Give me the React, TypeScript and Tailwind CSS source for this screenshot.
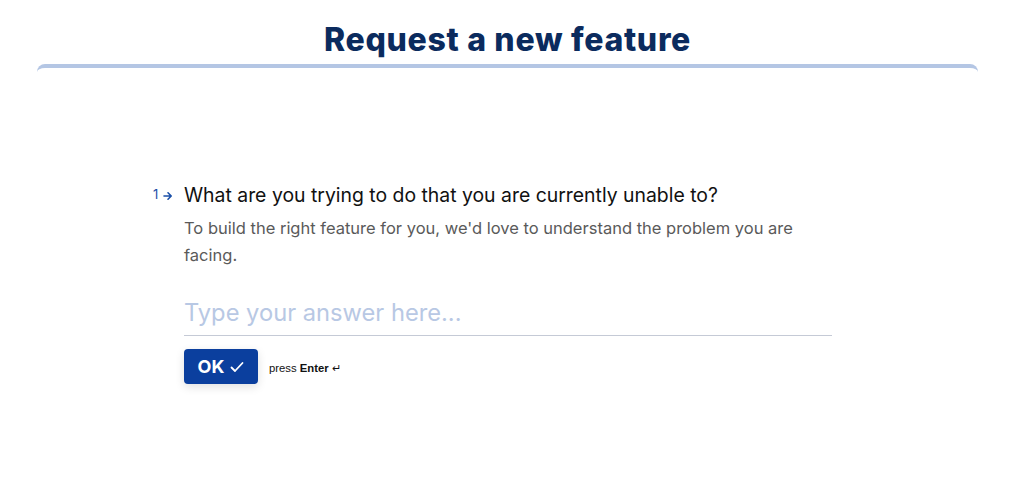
import React from "react";

export default function App() {
  return (
    <div className="w-[1036px] h-[490px] bg-white overflow-hidden" style={{ fontFamily: "Inter, 'Liberation Sans', sans-serif" }}>
      <div className="w-[941px] ml-[37px]">
        <h1 className="text-center text-[#0b2b5e] font-extrabold text-[32px] leading-[40px] pt-[20px] tracking-[0.7px]" style={{ fontFamily: "Inter, sans-serif" }}>
          Request a new feature
        </h1>
        <div className="mt-[4px] h-[8px] rounded-t-[8px] border-t-[4px] border-[#b4c6e4]" />
      </div>
      <div className="ml-[153px] mt-[111px] flex">
        <div className="w-[31px] flex items-center h-[24px] text-[#1a4fa8] text-[13px] gap-[5px]">
          <span>1</span>
          <svg width="10" height="10" viewBox="0 0 10 10" className="mt-[1px]">
            <path d="M1 5h7M5 1.8L8.2 5 5 8.2" stroke="#1a4fa8" strokeWidth="1.6" fill="none" strokeLinecap="round" strokeLinejoin="round" />
          </svg>
        </div>
        <div className="w-[648px]">
          <div className="text-[19.4px] leading-[24px] text-[#111]">What are you trying to do that you are currently unable to?</div>
          <div className="mt-[8px] text-[16.5px] leading-[27px] text-[#5a5a5a] pr-[30px]">
            To build the right feature for you, we'd love to understand the problem you are facing.
          </div>
          <div className="mt-[28px] border-b border-[#c5cad6] pb-[6px] text-[23.7px] leading-[32px] text-[#b8c8e4]">
            Type your answer here...
          </div>
          <div className="mt-[13px] flex items-center">
            <button className="h-[35px] w-[74px] rounded-[4px] bg-[#0b3f9e] text-white font-bold text-[18px] flex items-center justify-center gap-[6px] shadow-[0_3px_10px_rgba(0,0,0,0.12)]">
              <span>OK</span>
              <svg width="14" height="12" viewBox="0 0 14 12">
                <path d="M1.5 6.5L5 10 12.5 2" stroke="white" strokeWidth="1.8" fill="none" strokeLinecap="round" strokeLinejoin="round" />
              </svg>
            </button>
            <span className="ml-[11px] mt-[3px] text-[11.3px] text-[#111]" style={{ fontFamily: "'Liberation Sans', sans-serif" }}>
              press <b>Enter</b> ↵
            </span>
          </div>
        </div>
      </div>
    </div>
  );
}
